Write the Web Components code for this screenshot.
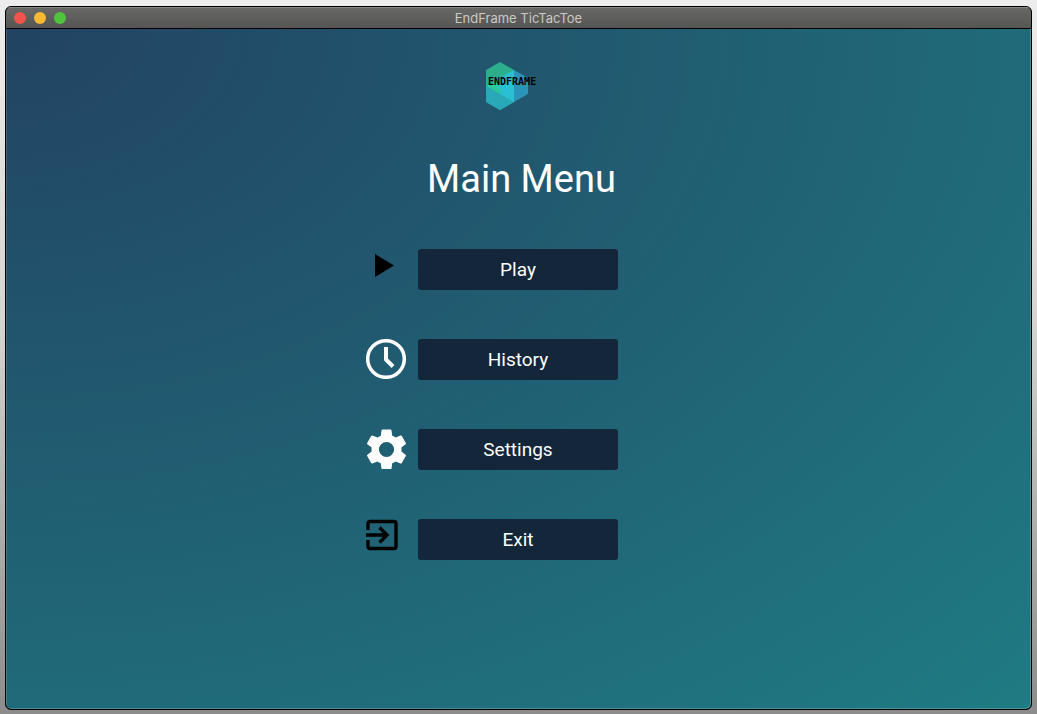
<!DOCTYPE html>
<html lang="en">
<head>
<meta charset="utf-8">
<title>EndFrame TicTacToe</title>
<style>
html { height: 100%; }
body {
  margin: 0; min-height: 100%; box-sizing: border-box; padding: 6px 5px 4px;
  display: flex; font-family: Roboto, "Liberation Sans", sans-serif;
  background: linear-gradient(#ededed, #d4d4d4 45%, #8c8c8c);
}
</style>
</head>
<body>
<app-window heading="EndFrame TicTacToe">
  <main-menu>
    <menu-item icon="play">Play</menu-item>
    <menu-item icon="history">History</menu-item>
    <menu-item icon="settings">Settings</menu-item>
    <menu-item icon="exit">Exit</menu-item>
  </main-menu>
</app-window>
<script>
class AppWindow extends HTMLElement {
  constructor() {
    super();
    this.attachShadow({ mode: 'open' }).innerHTML = `
<style>
:host { flex: 1; display: flex; flex-direction: column; box-sizing: border-box; border: 1px solid #000; border-radius: 6px; overflow: hidden; background: #000; }
header { display: grid; grid-template-columns: 1fr auto 1fr; align-items: center; height: 21px; padding: 0 8px; box-sizing: border-box; margin-bottom: 1px; background: linear-gradient(#686866, #555553); box-shadow: inset 0 1px #858583; color: #c9c9c7; font: 13px/20px Inter, "Liberation Sans", sans-serif; }
.lights { display: flex; gap: 8px; }
button { width: 12px; height: 12px; padding: 0; border: 0; border-radius: 50%; }
.close { background: #f2544d; } .min { background: #f8b934; } .max { background: #50c43c; }
main { flex: 1; background: radial-gradient(farthest-corner at 0 0, #224363, #1f7b83); box-shadow: inset 1px 0 #ffffff22, inset -1px -1px #ffffff33; border-radius: 0 0 5px 5px; }
</style>
<header>
  <div class="lights"><button class="close" aria-label="Close"></button><button class="min" aria-label="Minimize"></button><button class="max" aria-label="Zoom"></button></div>
  <span></span>
</header>
<main><slot></slot></main>`;
    this.shadowRoot.querySelector('span').textContent = this.getAttribute('heading');
  }
}
customElements.define('app-window', AppWindow);

class BrandLogo extends HTMLElement {
  constructor() {
    super();
    this.attachShadow({ mode: 'open' }).innerHTML = `
<style>
:host { display: block; width: 50px; height: 50px; }
svg { display: block; overflow: visible; }
text { font: 900 10px "DejaVu Sans Mono", monospace; }
</style>
<svg width="50" height="50" viewBox="0 0 50 50" role="img" aria-label="Endframe">
  <path d="M14 0 28 8V40L14 48 0 40V8Z" fill="#2cae8d"/>
  <path d="M28 8 42 16V32L28 40Z" fill="#2c94b9"/>
  <path d="M0 24 28 8V24L14 32Z" fill="#2aca9d"/>
  <path d="M0 24 14 32 28 24V40L14 48 0 40Z" fill="#29a8b8"/>
  <path d="M28 8V40L14 32V16Z" fill="#2bbfd4"/>
  <path d="M0 24V10L14 16 9 20Z" fill="#2cae8d"/>
  <text x="2" y="23">ENDFRAME</text>
</svg>`;
  }
}
customElements.define('brand-logo', BrandLogo);

class MainMenu extends HTMLElement {
  constructor() {
    super();
    this.attachShadow({ mode: 'open' }).innerHTML = `
<style>
:host { display: flex; flex-direction: column; align-items: center; padding: 33px 0 48px; }
brand-logo { margin-right: 16px; }
h1 { margin: 41px 0 44px; padding-left: 6px; font-size: 38px; line-height: 52px; font-weight: 400; color: #fff; }
nav { display: flex; flex-direction: column; gap: 49px; padding-right: 1px; }
</style>
<brand-logo></brand-logo>
<h1>Main Menu</h1>
<nav><slot></slot></nav>`;
  }
}
customElements.define('main-menu', MainMenu);

const ICONS = {
  play: '<path d="M9 5 28 16.500 9 28Z" fill="#000"/>',
  history: '<g fill="none" stroke="#fff"><circle cx="20" cy="20" r="18.300" stroke-width="3.500"/><path d="M20 8V20.500L27 27.500" stroke-width="4" stroke-linejoin="round"/></g>',
  settings: '<path transform="translate(-3.500 -3.500) scale(2)" fill="#fff" d="M19.430 12.980c.04-.32.07-.64.07-.98s-.03-.66-.07-.98l2.110-1.650c.19-.15.24-.42.12-.64l-2-3.460c-.12-.22-.39-.3-.61-.22l-2.490 1c-.52-.4-1.080-.73-1.690-.98l-.38-2.650C14.460 2.180 14.250 2 14 2h-4c-.25 0-.46.18-.49.42l-.38 2.650c-.61.25-1.170.59-1.690.98l-2.490-1c-.23-.09-.49 0-.61.22l-2 3.460c-.13.22-.07.49.12.64l2.110 1.650c-.04.32-.07.65-.07.98s.03.66.07.98l-2.110 1.650c-.19.15-.24.42-.12.64l2 3.460c.12.22.39.3.61.22l2.490-1c.52.4 1.080.73 1.690.98l.38 2.650c.03.24.24.42.49.42h4c.25 0 .46-.18.49-.42l.38-2.650c.61-.25 1.170-.59 1.690-.98l2.490 1c.23.09.49 0 .61-.22l2-3.460c.12-.22.07-.49-.12-.64l-2.110-1.650zM12 15.800a3.800 3.800 0 1 1 0-7.600a3.800 3.800 0 1 1 0 7.600z" fill-rule="evenodd"/>',
  exit: '<g fill="none" stroke="#000" stroke-width="3.400"><path d="M2 11V4.500Q2 2.500 4 2.500H28Q30 2.500 30 4.500V27.500Q30 29.500 28 29.500H4Q2 29.500 2 27.500V21"/><path d="M0 16H21M13.500 8.500 21 16 13.500 23.500"/></g>'
};

class MenuItem extends HTMLElement {
  constructor() {
    super();
    this.attachShadow({ mode: 'open' }).innerHTML = `
<style>
:host { display: grid; grid-template-columns: 40px 200px 40px; column-gap: 12px; align-items: start; }
svg { display: block; width: 40px; height: 40px; }
button { height: 41px; padding: 0; border: 0; border-radius: 3px; background: #14263a; color: #fff; font: 400 19px/24px Roboto, "Liberation Sans", sans-serif; }
</style>
<svg viewBox="0 0 40 40" aria-hidden="true">${ICONS[this.getAttribute('icon')]}</svg>
<button type="button"><slot></slot></button>`;
  }
}
customElements.define('menu-item', MenuItem);
</script>
</body>
</html>
